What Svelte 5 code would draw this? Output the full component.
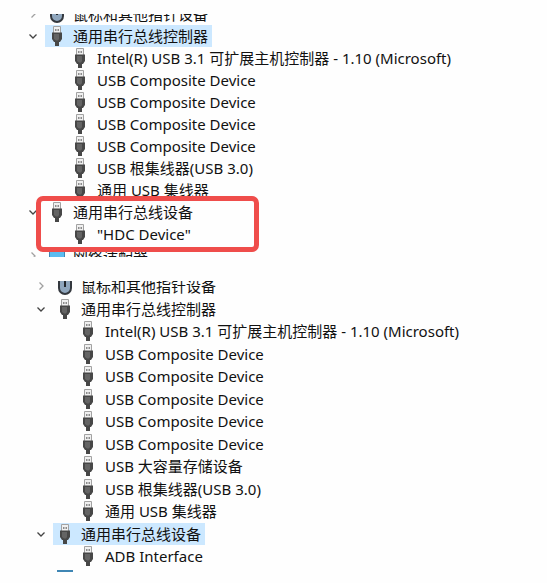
<script>
  import { slide } from 'svelte/transition';

  let trees = $state([
    {
      name: 'hdc',
      label: '设备管理器 HDC',
      groups: [
        { label: '鼠标和其他指针设备', icon: 'mouse', open: false, items: [] },
        {
          label: '通用串行总线控制器',
          icon: 'usb',
          open: true,
          selected: true,
          items: [
            'Intel(R) USB 3.1 可扩展主机控制器 - 1.10 (Microsoft)',
            'USB Composite Device',
            'USB Composite Device',
            'USB Composite Device',
            'USB Composite Device',
            'USB 根集线器(USB 3.0)',
            '通用 USB 集线器'
          ]
        },
        { label: '通用串行总线设备', icon: 'usb', open: true, marked: true, items: ['"HDC Device"'] },
        { label: '网络适配器', icon: 'network', open: false, items: [] }
      ]
    },
    {
      name: 'adb',
      label: '设备管理器 ADB',
      groups: [
        { label: '鼠标和其他指针设备', icon: 'mouse', open: false, items: [] },
        {
          label: '通用串行总线控制器',
          icon: 'usb',
          open: true,
          items: [
            'Intel(R) USB 3.1 可扩展主机控制器 - 1.10 (Microsoft)',
            'USB Composite Device',
            'USB Composite Device',
            'USB Composite Device',
            'USB Composite Device',
            'USB Composite Device',
            'USB 大容量存储设备',
            'USB 根集线器(USB 3.0)',
            '通用 USB 集线器'
          ]
        },
        { label: '通用串行总线设备', icon: 'usb', open: true, selected: true, items: ['ADB Interface'] },
        { label: '网络适配器', icon: 'network', open: false, items: [] }
      ]
    }
  ]);
</script>

{#snippet icon(kind)}
  <span class="icon">
    {#if kind === 'usb'}
      <svg width="12" height="20" viewBox="0 0 12 20" aria-hidden="true">
        <path d="M2.500 7V.5h7V7" fill="#f0f0f0" stroke="#a2a2a2" />
        <path d="M4 3h1.500v2H4zM6.500 3H8v2H6.500z" fill="#8c8c8c" />
        <path d="M1 6.500h10V13l-2 3H8v4H4v-4H3l-2-3z" fill="#474747" />
        <path d="M3 8h5v5l-1 1.500H5L3 13z" fill="#646464" />
      </svg>
    {:else if kind === 'mouse'}
      <svg width="14" height="20" viewBox="0 0 14 20" aria-hidden="true">
        <rect x="1" y="0" width="12" height="18" rx="6" fill="#8fa6bd" stroke="#34383e" stroke-width="2" />
        <path d="M7 2v9" stroke="#23272c" stroke-width="2" />
      </svg>
    {:else}
      <svg width="16" height="18" viewBox="0 0 16 18" aria-hidden="true">
        <rect width="16" height="14" fill="#3f86b4" />
        <rect x="1" y="2" width="14" height="11" fill="#5cbcf0" />
        <path d="M4 17h8" stroke="#66788a" stroke-width="2" />
      </svg>
    {/if}
  </span>
{/snippet}

<main>
  {#each trees as tree (tree.name)}
    <section class="pane {tree.name}" aria-label={tree.label}>
      <ul>
        {#each tree.groups as group}
          <li class:marked={group.marked}>
            <div class="row">
              <button
                class:open={group.open}
                aria-label={group.label}
                aria-expanded={group.open}
                onclick={() => (group.open = !group.open)}
              >
                <svg width="10" height="10" viewBox="0 0 10 10" aria-hidden="true">
                  <path d="M3.500 1.500L7 5 3.500 8.500" fill="none" stroke="currentColor" stroke-width="1.300" />
                </svg>
              </button>
              <span class="label" class:selected={group.selected}>
                {@render icon(group.icon)}
                {group.label}
              </span>
            </div>
            {#if group.open}
              <ul class="children" transition:slide={{ duration: 120 }}>
                {#each group.items as item}
                  <li class="label">
                    {@render icon('usb')}
                    {item}
                  </li>
                {/each}
              </ul>
            {/if}
          </li>
        {/each}
      </ul>
    </section>
  {/each}
</main>

<style>
  :global(body) {
    margin: 0;
    background: #fefefe;
  }

  main {
    display: flex;
    flex-direction: column;
    gap: 24px;

    padding: 14px 0 12px;

    font-family: 'Noto Sans', 'Noto Sans CJK SC', sans-serif;
    font-size: 15px;
    color: #111;
  }

  ul {
    margin: 0;
    padding: 0;
    list-style: none;
  }

  .pane {
    overflow: hidden;
  }

  .hdc {
    --row: 22px;
    padding-left: 25px;
  }

  .adb {
    --row: 1.5em;
    padding-left: 33px;
  }

  /* the lists are scrolled part of a row past both edges */
  .hdc > ul {
    margin: -11px 0 -10px;
  }

  .adb > ul {
    margin: -6px 0 -18px;
  }

  .row {
    display: flex;
    align-items: center;
    gap: 4px;
  }

  .label {
    display: flex;
    align-items: center;
    gap: 4px;

    height: var(--row);
    line-height: var(--row);
    white-space: nowrap;
  }

  .row > .label {
    padding-right: 4px;
  }

  .selected {
    background: #cce8ff;
  }

  .children {
    padding-left: 43px;
  }

  .children > .label {
    gap: 5px;
  }

  .icon {
    display: flex;
    align-items: center;
    justify-content: center;
    flex: none;

    width: 24px;
  }

  button {
    display: flex;
    align-items: center;
    justify-content: center;

    width: 16px;
    height: 16px;
    padding: 0;

    border: none;
    background: none;
    color: #a0a0a0;
    cursor: pointer;
  }

  button.open {
    color: #444;
  }

  button.open svg {
    transform: rotate(90deg);
  }

  .marked {
    position: relative;
  }

  /* red frame laid over the highlighted group */
  .marked::after {
    content: '';
    position: absolute;
    top: -5px;
    bottom: -7px;
    left: 11px;

    width: 213px;

    border: 5px solid #ef4d4b;
    border-radius: 7px;
    pointer-events: none;
  }
</style>
